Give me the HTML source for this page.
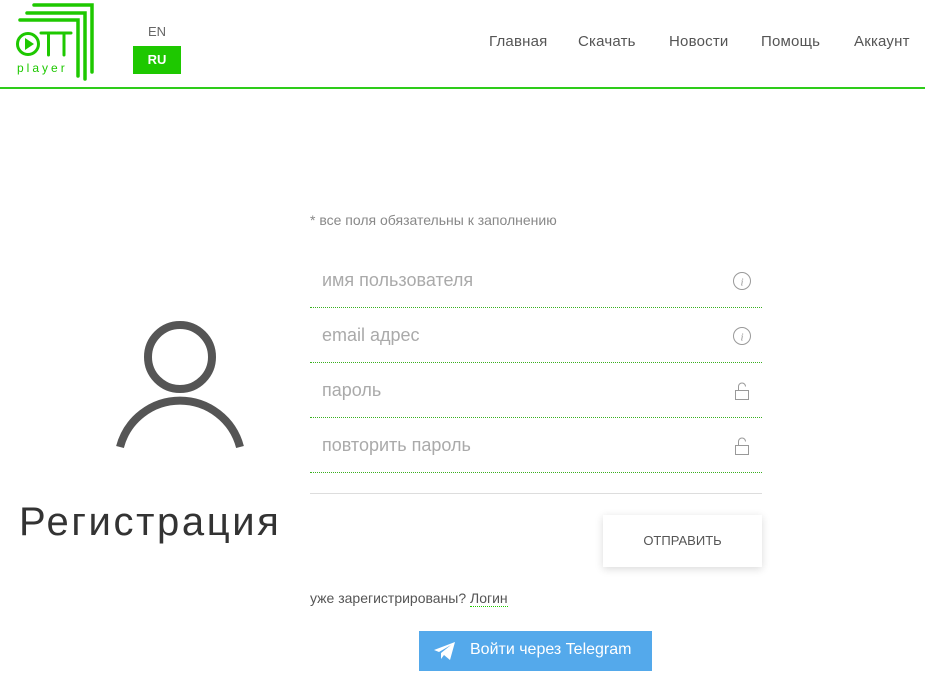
<!DOCTYPE html>
<html><head><meta charset="utf-8"><style>
*{margin:0;padding:0;box-sizing:border-box}
body{width:925px;height:681px;background:#fff;font-family:"Liberation Sans","Noto Sans CJK SC",sans-serif;position:relative;overflow:hidden;color:#555}
.hdr{position:absolute;left:0;top:0;width:925px;height:89px;border-bottom:2px solid #2ecc1a}
.nav{position:absolute;top:33px;font-size:15px;color:#555;letter-spacing:0.2px}
.en{position:absolute;left:148px;top:24px;font-size:13px;color:#666}
.ru{position:absolute;left:133px;top:46px;width:48px;height:28px;background:#1ec800;color:#fff;font-size:13px;font-weight:bold;text-align:center;line-height:28px}
.note{position:absolute;left:310px;top:212px;font-size:14px;color:#888}
.f{position:absolute;left:310px;width:452px;height:55px;border-bottom:1px dotted #3ab020}
.f span{position:absolute;left:12px;top:17px;font-size:18px;color:#aaa}
.f svg{position:absolute;right:10px;top:18px}
.title{position:absolute;left:19px;top:500px;font-size:40px;color:#333;letter-spacing:2.6px}
.btn{position:absolute;left:603px;top:515px;width:159px;height:52px;background:#fff;box-shadow:0 2px 8px rgba(0,0,0,.15);font-size:13px;color:#555;text-align:center;line-height:52px}
.tg{position:absolute;left:419px;top:631px;width:233px;height:40px;background:#54a9eb;color:#fff;font-size:16px;line-height:38px}
</style></head><body>
<div class="hdr">
<svg width="100" height="85" style="position:absolute;left:0;top:0">
<g stroke="#1ec800" stroke-width="3.5" fill="none" stroke-linecap="round">
<path d="M34 5H92V72"/><path d="M27 13H85V79"/><path d="M20 20H78V76"/>
<circle cx="28" cy="44" r="10.5" stroke-width="3"/>
<path d="M41 33H56M48.5 33V55M57 33H71M64 33V55" stroke-width="3"/>
</g>
<path d="M25 38L34 44L25 50Z" fill="#1ec800"/>
<text x="17" y="72" font-size="12" fill="#1ec800" letter-spacing="3" font-family="Liberation Sans">player</text>
</svg>
<div class="en">EN</div><div class="ru">RU</div>
<div class="nav" style="left:489px">Главная</div>
<div class="nav" style="left:578px">Скачать</div>
<div class="nav" style="left:669px">Новости</div>
<div class="nav" style="left:761px">Помощь</div>
<div class="nav" style="left:854px">Аккаунт</div>
</div>
<svg width="140" height="140" style="position:absolute;left:110px;top:320px">
<g stroke="#555" stroke-width="8" fill="none"><circle cx="70" cy="37" r="32"/><path d="M10 127A62 62 0 0 1 130 127"/></g>
</svg>
<div class="title">Регистрация</div>
<div class="note">* все поля обязательны к заполнению</div>
<div class="f" style="top:253px"><span>имя пользователя</span><svg width="20" height="20"><circle cx="10" cy="10" r="8.5" stroke="#999" fill="none"/><text x="10" y="14.5" font-size="11" font-style="italic" fill="#999" text-anchor="middle" font-family="Liberation Serif">i</text></svg></div>
<div class="f" style="top:308px"><span>email адрес</span><svg width="20" height="20"><circle cx="10" cy="10" r="8.5" stroke="#999" fill="none"/><text x="10" y="14.5" font-size="11" font-style="italic" fill="#999" text-anchor="middle" font-family="Liberation Serif">i</text></svg></div>
<div class="f" style="top:363px"><span>пароль</span><svg width="20" height="20"><g stroke="#999" fill="none"><rect x="3.5" y="9.5" width="13" height="9"/><path d="M6.5 9.5V5.5A3.5 3.5 0 0 1 13.5 5.5"/></g></svg></div>
<div class="f" style="top:418px"><span>повторить пароль</span><svg width="20" height="20"><g stroke="#999" fill="none"><rect x="3.5" y="9.5" width="13" height="9"/><path d="M6.5 9.5V5.5A3.5 3.5 0 0 1 13.5 5.5"/></g></svg></div>
<div style="position:absolute;left:310px;top:493px;width:452px;border-top:1px solid #ddd"></div>
<div class="btn">ОТПРАВИТЬ</div>
<div style="position:absolute;left:310px;top:590px;font-size:14px;color:#555">уже зарегистрированы? <span style="border-bottom:1px dotted #1ec800">Логин</span></div>
<div class="tg"><svg width="24" height="20" style="position:absolute;left:14px;top:10px"><path d="M1 9L22 1L17 19L11 14L8 18L8 12L18 4L6 11Z" fill="#fff"/></svg><span style="position:absolute;left:51px">Войти через Telegram</span></div>
</body></html>
